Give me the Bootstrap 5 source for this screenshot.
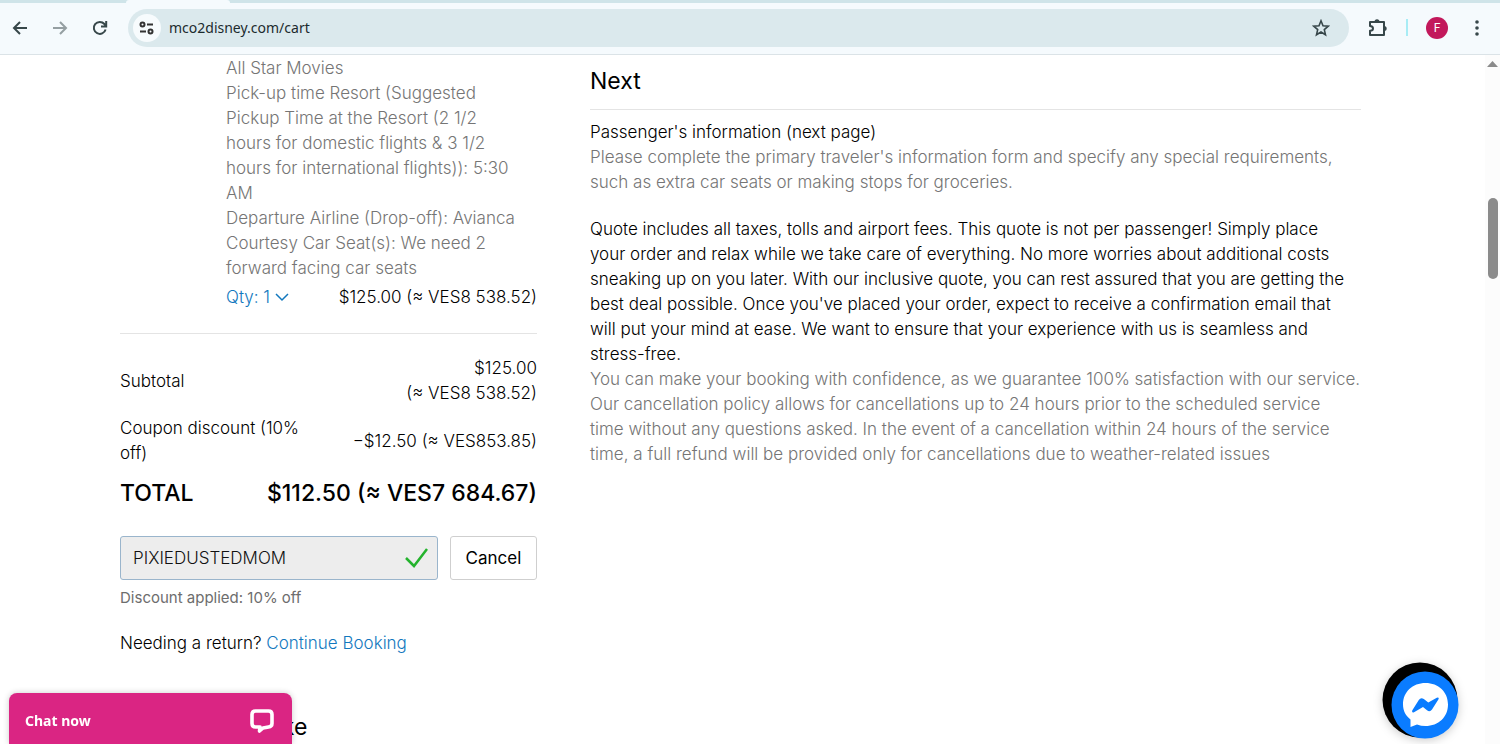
<!DOCTYPE html>
<html lang="en">
<head>
<meta charset="utf-8">
<meta name="viewport" content="width=device-width, initial-scale=1">
<title>Cart</title>
<link href="https://cdn.jsdelivr.net/npm/bootstrap@5.3.0/dist/css/bootstrap.min.css" rel="stylesheet">
<style>
body{font:300 17px/25px Inter,"Liberation Sans",sans-serif;color:#000;background:#fff}
.tab-strip{height:3px;background:#cfe4e9}
.tab-strip span{display:block;width:104px;height:3px;margin-left:126px;background:#f5fafd;border-radius:3px 3px 0 0}
.toolbar{height:52px;padding:0 3px 2px 0;background:#f5fafd;border-bottom:1px solid #dbe3e7;color:#37474a}
.tool{width:40px;height:38px;padding:0;border:0;background:none;color:inherit;display:flex;align-items:center;justify-content:center}
.address{height:38px;background:#dbe9ed;border-radius:19px;margin:0 8px}
.address input{border:0;background:none;outline:0;color:#1c2b2e;font:400 14px/20px "Noto Sans","Open Sans",sans-serif;padding:0}
.site-info{width:28px;height:28px;border-radius:50%;background:#f7fbfd;margin-left:5px;padding:0;border:0;color:#333}
.divider{width:2px;height:17px;background:#a8ecf5;margin:0 9px}
.avatar{width:22px;height:22px;border-radius:50%;background:#c2185b;color:#fff;font:400 12px/22px Roboto,sans-serif}
.page-body{display:grid;grid-template-columns:minmax(0,351fr) minmax(0,649fr);column-gap:53px;padding:1px 124px 0 120px}
.soft{color:#757575}
.item{padding-left:106px}
.details{padding-right:14px}
.blue,.blue:hover{color:#1278be;text-decoration:none}
.rule{border-top:1px solid #e4e4e4}
.item-rule{margin-top:23px}
.next-step{padding-top:10px}
.next-rule{margin:13px 0 10px}
.heading{font-size:23px;line-height:30px;font-weight:400;margin:0}
.totals{width:100%;margin-top:22px}
.totals th,.totals td{padding:0}
.totals th{font-weight:300;width:200px}
.totals td{text-align:right}
.totals .discount>*{padding-top:10px}
.total-row{padding-top:12px;padding-bottom:28px}
.total-row .heading{font-weight:500}
.intro{margin-bottom:22px}
.code{height:44px;background:#ededed;border:1px solid #9ab5cc;border-radius:3px}
.code input{border:0;background:none;outline:0;font:inherit;padding:0 0 0 12px;min-width:0;color:#111}
.cancel{width:87px;height:44px;background:#fff;border:1px solid #cfcfcf;border-radius:3px;font-weight:400;padding:0}
.note{font-size:15px;line-height:20px;font-weight:400;color:#6d6d6d;margin:8px 0 23px}
.scroll{width:15px;background:#fcfcfc}
.thumb{width:10px;height:81px;border-radius:5px;background:#8b8b8b;margin-top:129px}
.chat{left:9px;bottom:0;width:283px;height:51px;background:#da2583;color:#fff;border:0;border-radius:8px 8px 0 0;padding:5px 17px 0 16px;font:700 14px/20px "Noto Sans",sans-serif;box-shadow:0 0 6px #0003}
.messenger{right:41px;bottom:2px;width:78px;height:80px;border:0;padding:0;background:none}
.messenger svg{display:block;filter:drop-shadow(0 2px 5px #0003)}
</style>
</head>
<body class="vh-100 overflow-hidden d-flex flex-column">
<header class="flex-shrink-0">
<div class="tab-strip"><span></span></div>
<nav class="toolbar d-flex align-items-center">
<button class="tool" aria-label="Back"><svg width="16" height="16" fill="none" stroke="currentColor" stroke-width="2"><path d="M15 8H2M8 2 2 8l6 6"/></svg></button>
<button class="tool opacity-50" aria-label="Forward"><svg width="16" height="16" fill="none" stroke="currentColor" stroke-width="2"><path d="M1 8h13M8 2l6 6-6 6"/></svg></button>
<button class="tool" aria-label="Reload"><svg width="16" height="16" fill="none" stroke="currentColor" stroke-width="2"><path d="M13.6 9.5A6 6 0 1 1 12.4 4L14 5.8M14.2 1v5.4H9"/></svg></button>
<div class="address flex-grow-1 d-flex align-items-center">
<button class="site-info d-flex align-items-center justify-content-center" aria-label="Site information"><svg width="16" height="14" fill="none" stroke="currentColor" stroke-width="2"><circle cx="3.5" cy="3.5" r="2"/><path d="M8 3.5h6M1 10.5h6"/><circle cx="11.5" cy="10.5" r="2"/></svg></button>
<input class="flex-grow-1 ms-2" aria-label="Address" value="mco2disney.com/cart">
<button class="tool me-2" aria-label="Bookmark"><svg width="18" height="18" fill="none" stroke="currentColor" stroke-width="1.6"><path d="m9 1.8 2 4.9 5.3.4-4 3.5 1.2 5.2L9 13l-4.5 2.8 1.2-5.2-4-3.5L7 6.700z"/></svg></button>
</div>
<button class="tool" aria-label="Extensions"><svg width="20" height="20" fill="none" stroke="currentColor" stroke-width="2" stroke-linejoin="round"><path d="M3 4h14v13H3v-4.200q3-.1 3-2.300T3 8z"/><path fill="currentColor" stroke="none" d="M7.500 4a2.500 2.700 0 0 1 5 0zM17 8a2.700 2.500 0 0 1 0 5z"/></svg></button>
<span class="divider"></span>
<button class="tool" aria-label="Profile"><span class="avatar">F</span></button>
<button class="tool" aria-label="Menu"><svg width="4" height="18" fill="currentColor"><circle cx="2" cy="3" r="1.800"/><circle cx="2" cy="9" r="1.800"/><circle cx="2" cy="15" r="1.800"/></svg></button>
</nav>
</header>
<div class="d-flex flex-grow-1 overflow-hidden">
<main class="page-body flex-grow-1">
<section>
<div class="item">
<div class="soft details">All Star Movies<br>Pick-up time Resort (Suggested Pickup Time at the Resort (2 1/2 hours for domestic flights &amp; 3 1/2 hours for international flights)): 5:30 AM<br>Departure Airline (Drop-off): Avianca<br>Courtesy Car Seat(s): We need 2 forward facing car seats</div>
<div class="d-flex justify-content-between mt-1"><a href="#" class="blue">Qty: 1 <svg width="14" height="11" fill="none" stroke="currentColor" stroke-width="1.500"><path d="m1 1 6 6 6-6"/></svg></a><span>$125.00 (≈ VES8 538.52)</span></div>
</div>
<div class="rule item-rule"></div>
<table class="totals">
<tr><th scope="row">Subtotal</th><td>$125.00<br>(≈ VES8 538.52)</td></tr>
<tr class="discount"><th scope="row" class="pe-3">Coupon discount (10% off)</th><td class="text-nowrap">−$12.50 (≈ VES853.85)</td></tr>
</table>
<div class="total-row d-flex justify-content-between"><span class="heading">TOTAL</span><span class="heading">$112.50 (≈ VES7 684.67)</span></div>
<div class="d-flex">
<div class="code flex-grow-1 d-flex align-items-center me-2"><input class="flex-grow-1" aria-label="Coupon code" value="PIXIEDUSTEDMOM"><svg class="me-2 flex-shrink-0" width="26" height="22" fill="none" stroke="#24b32d" stroke-width="2.500"><path d="m3 11 8 8L24 2"/></svg></div>
<button class="cancel ms-1">Cancel</button>
</div>
<div class="note">Discount applied: 10% off</div>
<div>Needing a return? <a href="#" class="blue">Continue Booking</a></div>
<h2 class="heading mt-5 pt-2">You may also like</h2>
</section>
<section class="next-step">
<h1 class="heading">Next</h1>
<div class="rule next-rule"></div>
<div>Passenger's information (next page)</div>
<p class="soft intro">Please complete the primary traveler's information form and specify any special requirements, such as extra car seats or making stops for groceries.</p>
<div class="pe-2">Quote includes all taxes, tolls and airport fees. This quote is not per passenger! Simply place your order and relax while we take care of everything. No more worries about additional costs sneaking up on you later. With our inclusive quote, you can rest assured that you are getting the best deal possible. Once you've placed your order, expect to receive a confirmation email that will put your mind at ease. We want to ensure that your experience with us is seamless and stress-free.</div>
<p class="soft m-0">You can make your booking with confidence, as we guarantee 100% satisfaction with our service. Our cancellation policy allows for cancellations up to 24 hours prior to the scheduled service<br>time without any questions asked. In the event of a cancellation within 24 hours of the service time, a full refund will be provided only for cancellations due to weather-related issues</p>
</section>
</main>
<div class="scroll d-flex flex-column align-items-center flex-shrink-0"><svg class="mt-1" width="11" height="10" fill="#8b8b8b"><path d="m0 8 5.500-6L11 8z"/></svg><div class="thumb"></div></div>
</div>
<button class="chat position-fixed d-flex align-items-center justify-content-between">Chat now <svg width="26" height="26" fill="none" stroke="#fff" stroke-width="3.600" stroke-linejoin="round"><path d="M6.500 3h13Q23 3 23 6.500v9Q23 18.500 19.500 19L14 20l-3.500 3 .5-4H6.500Q3 19 3 15.500v-9Q3 3 6.500 3z"/></svg></button>
<button class="messenger position-fixed" aria-label="Messenger"><svg width="78" height="80"><circle cx="39" cy="38" r="37.500"/><circle cx="44" cy="43" r="33.500" fill="#0a7cff"/><path fill="#fff" d="M44.500 21C31.500 21 22 30 22 42.500c0 6.500 3 11.500 7.500 15V65l6.500-2.500q4 1.500 8.500 1.500C57.500 64 67 55 67 42.500S57.500 21 44.500 21z"/><path fill="#0a7cff" d="M31.200 48.500 37.800 38q2-3 5-1l4.500 3.500 8.500-4.800q2.800-.8 1.700 1.600L51 47.500q-2 2.800-5 .8L42 45l-9 5.200q-2.500.8-1.800-1.700z"/></svg></button>
<script src="https://cdn.jsdelivr.net/npm/bootstrap@5.3.0/dist/js/bootstrap.bundle.min.js"></script>
</body>
</html>
